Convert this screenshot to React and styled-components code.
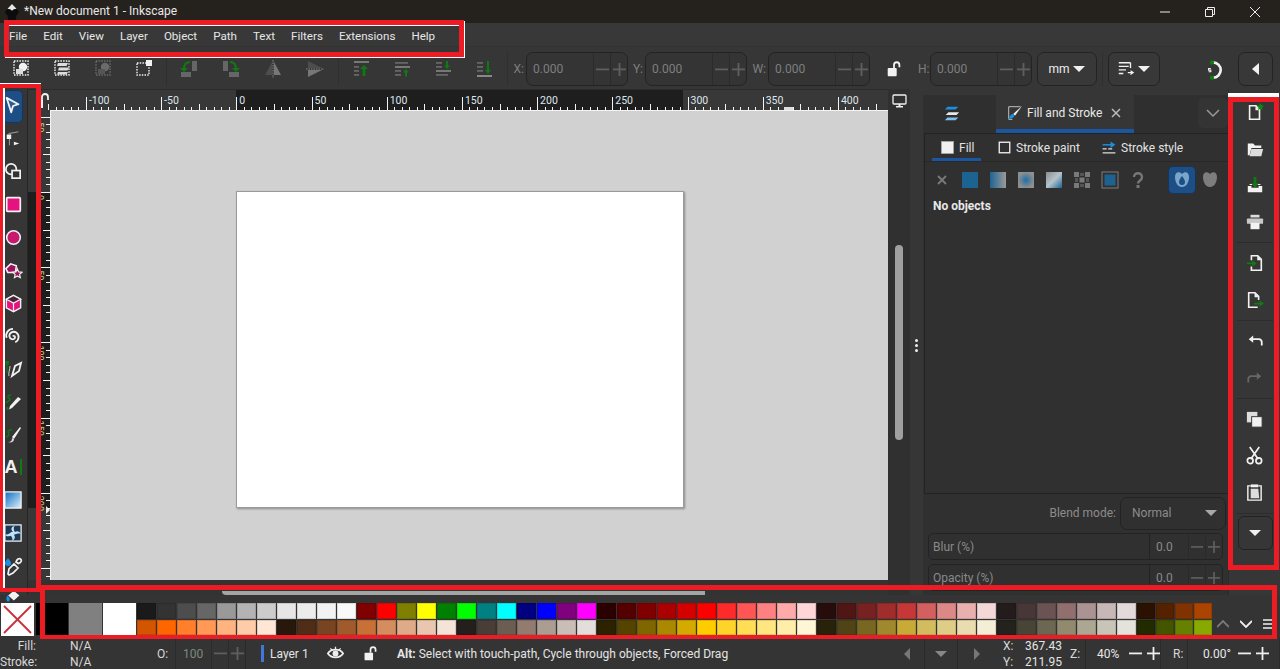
import React from "react";
import styled, { createGlobalStyle } from "styled-components";

const W = "#f2f2f2";
const D = "#6b6b6b";
const G = "#0f7a12";
const B = "#1b8fe0";
const P = "#e6127f";

const Global = createGlobalStyle`
  html, body { margin: 0; padding: 0; background: #333; }
  * { box-sizing: border-box; }
`;
const Page = styled.div`
  position: relative; width: 1280px; height: 669px; overflow: hidden; display: flex; flex-direction: column;
  font-family: Roboto, "Noto Sans", sans-serif; font-size: 12px; color: #e4e4e4; background: #363636;
`;
const Glyph = styled.svg`display: block; flex: none; width: ${p => p.$s || 20}px; height: ${p => p.$s || 20}px;`;
const I = ({ s, children }) => <Glyph $s={s} viewBox="0 0 20 20">{children}</Glyph>;

/* ---------- title + menu ---------- */
const TitleBar = styled.div`height: 23px; background: #25211d; display: flex; align-items: center; padding: 0 3px;`;
const TitleText = styled.div`margin-left: 3px; font-size: 12px; color: #e8e8e8; flex: 1; line-height: 23px;`;
const WinButton = styled.div`width: 45px; display: flex; justify-content: center; align-items: center; height: 23px;`;
const MenuBar = styled.div`height: 24px; background: #383838; display: flex; align-items: center; padding: 2px 0 0 1px; border-bottom: 1px solid #333;`;
const MenuItem = styled.div`padding: 0 8px; font-size: 11.6px; line-height: 22px; color: #e6e6e6;`;

/* ---------- commands toolbar ---------- */
const TopBar = styled.div`height: 42px; background: #363636; display: flex; align-items: center; padding: 2px 0 0 1px;`;
const ToolCell = styled.div`
  width: ${p => p.$w || 41}px; height: 34px; flex: none; display: flex; align-items: center;
  justify-content: ${p => p.$end ? "flex-end" : "center"}; padding-right: ${p => p.$end || 0}px;
`;
const VSep = styled.div`width: 1px; height: 34px; background: #2f2f2f; margin: 0 ${p => p.$m || 3}px; flex: none;`;
const FieldLabel = styled.div`width: ${p => p.$w || 18}px; flex: none; text-align: right; padding-right: 2px; font-size: 12px; color: #7f7f7f;`;
const Spin = styled.div`
  width: 102px; height: 34px; flex: none; display: flex; align-items: stretch;
  border: 1px solid #232323; border-radius: 7px; background: #343434;
`;
const SpinValue = styled.div`flex: 1; padding-left: 6px; display: flex; align-items: center; font-size: 12px; color: #7f7f7f;`;
const SpinBtn = styled.div`width: 17px; flex: none; display: flex; align-items: center; justify-content: center; border-left: 1px solid #2b2b2b;`;
const DropBtn = styled.div`
  width: ${p => p.$w}px; height: 34px; flex: none; display: flex; align-items: center; justify-content: center; gap: 2px;
  border: 1px solid #232323; border-radius: 7px; background: #383838; font-size: 12px; color: #eee;
`;
const Pm = ({ c = "#5f5f5f", s = 13 }) => (<Glyph $s={s} viewBox="0 0 13 13"><rect x="0" y="5.5" width="13" height="1.8" fill={c} /></Glyph>);
const Pp = ({ c = "#5f5f5f", s = 13 }) => (<Glyph $s={s} viewBox="0 0 13 13"><rect x="0" y="5.5" width="13" height="1.8" fill={c} /><rect x="5.6" y="0" width="1.8" height="13" fill={c} /></Glyph>);
const Down = ({ c = "#f0f0f0", w = 14 }) => (<Glyph $s={w} viewBox="0 0 14 14"><path d="M1 4h12l-6 6z" fill={c} /></Glyph>);

const Dash = ({ c = W, x = 2, y = 2, w = 14, h = 14 }) => (<rect x={x} y={y} width={w} height={h} fill="none" stroke={c} strokeWidth="1.4" strokeDasharray="1.5 1.2" />);
const topIcons = [
  <I><Dash /><circle cx="11" cy="8" r="4.2" fill={W} /><rect x="4" y="10" width="7" height="5" fill="#ddd" /></I>,
  <I><Dash /><path d="M5 4h10l-1.500 3H4zM6 8.500h10l-1.500 3H5zM5 13h10l-1.500 2.500H4z" fill="#ddd" /></I>,
  <I><Dash c={D} /><circle cx="11" cy="8" r="4.200" fill={D} /><rect x="4" y="10" width="7" height="5" fill="#555" /></I>,
  <I><Dash y="4" w="12" h="12" /><rect x="11" y="1" width="6" height="6" fill={W} /></I>,
];
const rotIcons = [
  <I><rect x="13" y="2" width="5" height="10" fill="#666" /><rect x="2" y="13" width="10" height="5" fill="#666" /><path d="M11 3C7 3 5 6 5 10" fill="none" stroke={G} strokeWidth="2" /><path d="M1 9h8l-4 4z" fill={G} /></I>,
  <I><rect x="2" y="2" width="5" height="10" fill="#666" /><rect x="8" y="13" width="10" height="5" fill="#666" /><path d="M9 3c4 0 6 3 6 7" fill="none" stroke={G} strokeWidth="2" /><path d="M11 9h8l-4 4z" fill={G} /></I>,
  <I><path d="M2 16L9 3v13z" fill="#4d4d4d" /><path d="M11 3l7 13h-7z" fill="#777" /><path d="M10 1v18" stroke="#888" strokeDasharray="1.500 1" /></I>,
  <I><path d="M3 2l14 7H3z" fill="#4d4d4d" /><path d="M3 11h14l-14 7z" fill="#777" /><path d="M1 10h18" stroke="#888" strokeDasharray="1.500 1" /></I>,
];
const Lines = ({ ys }) => ys.map(([x, y, w]) => <rect key={y + "" + x} x={x} y={y} width={w} height="1.800" fill="#666" />);
const orderIcons = [
  <I><rect x="2" y="2" width="15" height="2" fill="#777" /><Lines ys={[[2, 7, 5], [2, 11, 5], [2, 15, 5]]} /><path d="M12 6l-4 4h2.600v7h2.800v-7H16z" fill={G} /></I>,
  <I><Lines ys={[[2, 3, 13], [2, 11, 6], [2, 15, 6]]} /><rect x="2" y="7" width="15" height="2" fill="#777" /><path d="M13 10l-3 3.500h2v4h2v-4h2z" fill={G} /></I>,
  <I><Lines ys={[[2, 3, 6], [2, 7, 6]]} /><rect x="2" y="11" width="15" height="2" fill="#777" /><rect x="2" y="15" width="12" height="1.800" fill="#666" /><path d="M13 10l-3-3.500h2V2h2v4.500h2z" fill={G} /></I>,
  <I><Lines ys={[[2, 3, 6], [2, 7, 6], [2, 11, 6]]} /><rect x="2" y="16" width="15" height="2" fill="#888" /><path d="M13 15l-3-4h2V2h2v9h2z" fill={G} /></I>,
];
const Padlock = ({ s = 18 }) => (<I s={s}><rect x="3" y="9" width="10" height="9" rx="1" fill={W} /><path d="M10 9V5.500a3 3 0 0 1 6 0V8" fill="none" stroke={W} strokeWidth="2" /></I>);

const TopToolbar = () => (
  <TopBar>
    {topIcons.map((c, i) => <ToolCell key={i}>{c}</ToolCell>)}
    <VSep $m={1} />
    {rotIcons.map((c, i) => <ToolCell key={i} $w={42}>{c}</ToolCell>)}
    <VSep $m={2} />
    {orderIcons.map((c, i) => <ToolCell key={i}>{c}</ToolCell>)}
    <VSep $m={2} />
    <FieldLabel $w={16}>X:</FieldLabel>
    <Spin><SpinValue>0.000</SpinValue><SpinBtn><Pm /></SpinBtn><SpinBtn><Pp /></SpinBtn></Spin>
    <FieldLabel $w={17}>Y:</FieldLabel>
    <Spin><SpinValue>0.000</SpinValue><SpinBtn><Pm /></SpinBtn><SpinBtn><Pp /></SpinBtn></Spin>
    <FieldLabel $w={21}>W:</FieldLabel>
    <Spin><SpinValue>0.000</SpinValue><SpinBtn><Pm /></SpinBtn><SpinBtn><Pp /></SpinBtn></Spin>
    <ToolCell $w={48}><Padlock /></ToolCell>
    <FieldLabel $w={12}>H:</FieldLabel>
    <Spin><SpinValue>0.000</SpinValue><SpinBtn><Pm /></SpinBtn><SpinBtn><Pp /></SpinBtn></Spin>
    <ToolCell $w={5} />
    <DropBtn $w={60}>mm<Down /></DropBtn>
    <VSep $m={5} />
    <DropBtn $w={52}>
      <I s={18}><path d="M2 3h13M2 7h11M2 11h8M2 15h5" stroke={W} strokeWidth="1.500" /><path d="M12 14h5M15 12l3 2-3 2" stroke={W} strokeWidth="1.300" fill="none" /><path d="M15 3v6" stroke={W} strokeWidth="1.500" /></I>
      <Down />
    </DropBtn>
    <ToolCell $w={78} $end={14}>
      <I s={22}><path d="M10 4a7 7 0 1 1 0 14" fill="none" stroke={W} strokeWidth="2.400" /><circle cx="9" cy="4" r="2" fill={G} /><circle cx="9" cy="18" r="2" fill={G} /><path d="M8 9.500H6v1.500h2v1.500H6" fill="none" stroke={W} strokeWidth="1" /></I>
    </ToolCell>
    <DropBtn $w={35}><Glyph $s={14} viewBox="0 0 14 14"><path d="M10 1v12L3 7z" fill={W} /></Glyph></DropBtn>
  </TopBar>
);

/* ---------- workspace ---------- */
const Workspace = styled.div`height: 506px; display: flex; flex: none;`;
const LeftTools = styled.div`width: 28px; flex: none; border-right: 1px solid #262626; padding: 1px 1px 0 0; display: flex; flex-direction: column; align-items: center; background: #363636;`;
const Tool = styled.div`
  width: 20px; height: 32.800px; flex: none; display: flex; align-items: center; justify-content: center;
  ${p => p.$on && "background: #1d4f86; border: 1px solid #14365c; border-radius: 5px;"}
`;
const leftIcons = [
  <I s={18}><path d="M3 1l13 7-6 2-2 7z" fill="#2a5f96" stroke={W} strokeWidth="2" strokeLinejoin="round" /></I>,
  <I s={18}><rect x="3" y="5" width="5" height="5" fill={W} /><path d="M5 4l11-2M6 10v7" stroke="#aaa" fill="none" /><path d="M11 13l6 2-6 2z" fill={W} /></I>,
  <I s={19}><circle cx="7.500" cy="7.500" r="5.500" fill="none" stroke={W} strokeWidth="1.800" /><rect x="8.500" y="9" width="8.500" height="8" fill="#333" stroke={W} strokeWidth="1.800" /></I>,
  <I s={17}><rect x="2" y="2" width="16" height="16" rx="1" fill={P} stroke={W} strokeWidth="2" /></I>,
  <I s={17}><circle cx="10" cy="10" r="8" fill="#c8186f" stroke={W} strokeWidth="1.800" /></I>,
  <I s={19}><path d="M2 8l5-5 6 2-1 7H4z" fill="#a01260" stroke={W} strokeWidth="1.600" /><path d="M14 8l1.500 3.500 3.500.3-2.600 2.300.8 3.500-3.200-1.800-3 1.800.7-3.500-2.600-2.300 3.500-.3z" fill="#a01260" stroke={W} strokeWidth="1.200" /></I>,
  <I s={19}><path d="M10 1.500l7.500 4v9l-7.500 4-7.500-4v-9z" fill={P} stroke={W} strokeWidth="1.500" /><path d="M10 1.500l7.500 4-7.500 4-7.500-4z" fill="#4a2238" stroke={W} strokeWidth="1.300" /><path d="M10 9.500v9" stroke={W} strokeWidth="1.300" /></I>,
  <I s={18}><path d="M10 10.500c1-1.500 3 0 2 2-1.500 2-5.500 1.500-6-2-.5-4 4-6.500 7.500-4.500 4 2.500 3.500 9-1 11M3 12C1 7 5 2 10 2" fill="none" stroke={W} strokeWidth="2" /></I>,
  <I s={20}><rect x="2.500" y="2" width="3.500" height="3.500" fill={G} /><path d="M4 5v9" stroke={G} strokeWidth="1.200" /><path d="M9 17l3-10 6-3-2 8z" fill="none" stroke={W} strokeWidth="1.800" /><path d="M7 7c0 4-2 7-1 10" stroke="#ccc" fill="none" /></I>,
  <I s={20}><path d="M9 16l-3 1.500 1-3.500 8-9 3 2z" fill={W} /><path d="M3 11c2-2 6-3 3-5-2-1-1-3 2-3" fill="none" stroke={G} strokeWidth="1.500" /><path d="M4 15l.8 3" stroke={G} strokeWidth="2" /></I>,
  <I s={20}><path d="M9 13l8-10 1 1-7 11z" fill={W} /><path d="M5 18c3 0 4-1 4-4l2 1c0 3-3 4-6 3z" fill="#ddd" /><path d="M3 13c3-1 4-3 2-5 0-2 2-2 4-2" fill="none" stroke={G} strokeWidth="1.400" /></I>,
  <ToolText />,
  <I s={18}><defs><linearGradient id="lg" x1="0" y1="0" x2="1" y2="1"><stop offset="0" stopColor="#0b6ec2" /><stop offset="1" stopColor="#dff1fc" /></linearGradient></defs><rect x="1" y="1" width="18" height="18" fill="url(#lg)" stroke={W} strokeWidth="1.400" /></I>,
  <I s={18}><rect x="1" y="1" width="18" height="18" fill="#1c3a55" stroke={W} strokeWidth="1.400" /><path d="M10 9C7 6 8 3 12 2c-2 2-1 5 0 7 3-2 5-1 7 2-3-1-5 0-8 1 2 3 1 5-2 7 1-3 0-5-2-6-2 1-4 1-6-1 3 0 5-1 7-3z" fill="#bfe2f8" /></I>,
  <I s={20}><path d="M5 2c2 2.500 3 4 3 5a3 3 0 0 1-6 0c0-1 1-2.500 3-5z" fill={B} /><path d="M6 19l-1-1 1-5 5-5 4 4-5 5zM13 6c1-3 3-4 4.500-3s1 3.500-2 4.500z" fill="none" stroke={W} strokeWidth="1.700" /></I>,
];
function ToolText() { return <ToolTextBox>A<ToolTextBar /></ToolTextBox>; }
const ToolTextBox = styled.div`font-family: "Liberation Sans", sans-serif; font-weight: 700; font-size: 18px; color: #f0f0f0; display: flex; align-items: center; gap: 2px; line-height: 20px;`;
const ToolTextBar = styled.span`display: block; width: 2px; height: 16px; background: ${G};`;

const CanvasColumn = styled.div`width: 860px; flex: none; display: flex; flex-direction: column; background: #383838;`;
const RulerRow = styled.div`display: flex; height: 469px;`;
const RulerSvg = styled.svg`display: block; flex: none;`;
const Canvas = styled.div`flex: 1; background: #d1d1d1; padding: 80px 0 0 185px;`;
const DocPage = styled.div`width: 448px; height: 317px; background: #fff; border: 1px solid #9a9a9a; box-shadow: 1px 1px 2px rgba(0,0,0,.35);`;
const HStrip = styled.div`flex: 1; background: #333; padding: 11px 0 0 194px;`;
const HThumb = styled.div`width: 483px; height: 4px; background: #a4a4a4; border-radius: 0 0 0 4px;`;
const VStrip = styled.div`width: 22px; flex: none; background: #303030; display: flex; flex-direction: column; align-items: center; padding-top: 5px;`;
const VThumb = styled.div`width: 8px; height: 195px; border-radius: 4px; background: #a0a0a0; margin-top: 136px;`;
const MonitorWrap = styled.div`height: 15px;`;
const Handle = styled.div`width: 13px; flex: none; background: #363636; display: flex; flex-direction: column; align-items: center; justify-content: center; gap: 2px; padding-top: 6px;`;
const Dot = styled.div`width: 3px; height: 3px; border-radius: 50%; background: #eee;`;

const SC = 1.504, X0 = 236.3, Y0 = 192;
const ticks = (from, to) => { const r = []; for (let u = from; u <= to; u += 5) r.push(u); return r; };
const HRuler = () => (
  <RulerSvg width="860" height="22" viewBox="28 89 860 22">
    <rect x="28" y="89" width="860" height="22" fill="#383838" />
    <rect x="236" y="89" width="447" height="22" fill="#1e1e1e" />
    <rect x="28" y="89" width="860" height="1" fill="#2c2c2c" />
    <rect x="50" y="110" width="838" height="1" fill="#f4f4f4" />
    {ticks(-125, 425).map(u => {
      const x = Math.round(X0 + u * SC) + 0.5;
      const t = u % 50 === 0 ? 97 : u % 25 === 0 ? 104 : 107;
      return <line key={u} x1={x} x2={x} y1={t} y2={110} stroke="#f4f4f4" />;
    })}
    {ticks(-100, 400).filter(u => u % 50 === 0).map(u => (
      <text key={u} x={X0 + u * SC + 3} y={104} fontSize="10.5" fill="#dfe6ee" fontFamily="Roboto">{u}</text>
    ))}
    <rect x="784" y="107" width="9" height="3" fill="#ddd" />
    <g transform="translate(36 94)">
      <rect x="0" y="6" width="7" height="8" fill={W} />
      <path d="M6 6V3a3 3 0 0 1 6 0v3" fill="none" stroke={W} strokeWidth="1.800" />
    </g>
  </RulerSvg>
);
const VRuler = () => (
  <RulerSvg width="23" height="469" viewBox="28 111 23 469">
    <rect x="28" y="111" width="23" height="469" fill="#383838" />
    <rect x="28" y="192" width="23" height="316" fill="#1e1e1e" />
    <rect x="50" y="111" width="1" height="469" fill="#f4f4f4" />
    {ticks(-50, 255).map(u => {
      const y = Math.round(Y0 + u * SC) + 0.5;
      const t = u % 50 === 0 ? 41 : u % 25 === 0 ? 43 : 46;
      return <line key={u} x1={t} x2={50} y1={y} y2={y} stroke="#f4f4f4" />;
    })}
    {[-50, 0, 50, 100, 150, 200].map(u => (
      <text key={u} transform={`translate(37 ${Y0 + u * SC + 3}) rotate(90)`} fontSize="9" fill="#d8c98a" fontFamily="Roboto">{u}</text>
    ))}
    <path d="M46 506l4 4-4 4z" fill="#eee" />
  </RulerSvg>
);

/* ---------- dialog panel ---------- */
const Panel = styled.div`flex: 1; min-width: 0; background: #363636; display: flex; flex-direction: column; padding-top: 6px;`;
const DockTabs = styled.div`height: 38px; flex: none; display: flex; background: #2f2f2f;`;
const DockIconTab = styled.div`width: 73px; display: flex; align-items: center; justify-content: center; padding-right: 16px;`;
const DockTab = styled.div`width: 138px; background: #363636; border-bottom: 4px solid #1a57a0; display: flex; align-items: center; padding: 1px 0 0 10px; gap: 3px; font-size: 12px; color: #e8e8e8; white-space: nowrap;`;
const DockClose = styled.span`margin-left: 6px; display: flex;`;
const DockFill = styled.div`flex: 1; display: flex; justify-content: flex-end; padding: 3px 0 0;`;
const DockMenu = styled.div`width: 30px; height: 30px; background: #343434; border-radius: 5px; display: flex; align-items: center; justify-content: center;`;
const PanelBody = styled.div`flex: 1; background: #303030; display: flex; flex-direction: column; min-height: 0;`;
const FillBox = styled.div`height: 361px; flex: none; margin-left: 1px; border: 1px solid #232323; border-width: 1px 0 1px 1px; display: flex; flex-direction: column;`;
const SubTabs = styled.div`height: 28px; flex: none; display: flex; align-items: stretch; border-bottom: 1px solid #282828; padding-left: 7px;`;
const SubTab = styled.div`
  width: ${p => p.$w}px; flex: none; display: flex; align-items: center; gap: 4px; padding-left: ${p => p.$pl || 0}px; font-size: 12px; color: #e2e2e2; white-space: nowrap;
  ${p => p.$on && "border-bottom: 3px solid #1a57a0; padding-top: 3px;"}
`;
const PaintRow = styled.div`height: 35px; display: flex; align-items: center; padding-left: 3px; flex: none;`;
const PaintCell = styled.div`width: 28px; height: 28px; flex: none; display: flex; align-items: center; justify-content: center; border-radius: 5px; ${p => p.$on && "background: #1d4f86; border: 1px solid #14365c;"}`;
const PaintGap = styled.div`width: ${p => p.$w}px; flex: none;`;
const NoObjects = styled.div`font-weight: 700; font-size: 12px; color: #e8e8e8; padding-left: 8px; line-height: 18px;`;
const BlendRow = styled.div`height: 34px; flex: none; margin-top: 2px; display: flex; align-items: center; justify-content: flex-end; padding-right: 2px; gap: 4px; font-size: 12px; color: #8c8c8c;`;
const BlendSelect = styled.div`width: 106px; height: 33px; border: 1px solid #232323; border-radius: 7px; display: flex; align-items: center; justify-content: space-between; padding: 0 7px 0 11px;`;
const SliderRow = styled.div`height: 27px; flex: none; margin: ${p => p.$mt || 3}px 5px 0 5px; border: 1px solid #232323; border-radius: 5px; display: flex; align-items: center; font-size: 12px; color: #8a8a8a;`;
const SliderName = styled.div`flex: 1; padding-left: 4px; height: 100%; display: flex; align-items: center; border-right: 1px solid #232323;`;
const SliderVal = styled.div`width: 38px; padding-left: 6px;`;
const SliderBtn = styled.div`width: 17px; height: 100%; border-left: 1px solid #2a2a2a; display: flex; align-items: center; justify-content: center;`;
const paintIcons = [
  <I s={20}><path d="M6 6l8 8M14 6l-8 8" stroke="#7a7a7a" strokeWidth="1.800" /></I>,
  <I s={20}><rect x="2" y="2" width="16" height="16" fill="#1d6392" /></I>,
  <I s={20}><defs><linearGradient id="p1"><stop offset="0" stopColor="#1d6392" /><stop offset="1" stopColor="#9a9a9a" /></linearGradient></defs><rect x="2" y="2" width="16" height="16" fill="url(#p1)" /></I>,
  <I s={20}><defs><radialGradient id="p2"><stop offset="0" stopColor="#1d6fa8" /><stop offset="1" stopColor="#8f8f8f" /></radialGradient></defs><rect x="2" y="2" width="16" height="16" fill="url(#p2)" /></I>,
  <I s={20}><defs><linearGradient id="p3" x1="0" y1="0" x2="1" y2="1"><stop offset="0" stopColor="#8c8c8c" /><stop offset=".5" stopColor="#b5c4cc" /><stop offset="1" stopColor="#1d6392" /></linearGradient></defs><rect x="2" y="2" width="16" height="16" fill="url(#p3)" /></I>,
  <I s={20}><path d="M2 2h5v5H2zM13 2h5v5h-5zM2 13h5v5H2zM13 13h5v5h-5zM7.500 7.500h5v5h-5z" fill="#7a7a7a" /><path d="M8 3h4v3H8zM3 8h3v4H3zM14 8h3v4h-3zM8 14h4v3H8z" fill="#555" /></I>,
  <I s={20}><rect x="2" y="2" width="16" height="16" fill="none" stroke="#7d7d7d" /><rect x="4.500" y="4.500" width="11" height="11" fill="#1d6392" /></I>,
  <I s={20}><path d="M6 7c0-5 8-5 8 0 0 4-4 3.500-4 6.500" fill="none" stroke="#777" strokeWidth="2.400" /><rect x="8.500" y="15" width="3" height="3" fill="#777" /></I>,
];

/* ---------- right command bar ---------- */
const RightBar = styled.div`width: 52px; flex: none; background: #363636; display: flex; flex-direction: column; align-items: center; padding-top: 5px; border-left: 1px solid #2b2b2b;`;
const Cmd = styled.div`width: 36px; height: 36.500px; flex: none; display: flex; align-items: center; justify-content: center;`;
const CmdSep = styled.div`width: 36px; height: 1px; flex: none; background: #2c2c2c; margin: 2px 0;`;
const CmdMore = styled.div`width: 35px; height: 34px; flex: none; margin-left: 1px; border: 1px solid #232323; border-radius: 6px; display: flex; align-items: center; justify-content: center;`;
const File = ({ extra }) => (<I s={18}><path d="M4 3h7l4 4v11H4z" fill="none" stroke={W} strokeWidth="1.800" /><path d="M10.500 3v5H15z" fill={W} />{extra}</I>);
const cmdGroups = [
  [
    <File extra={<path d="M16 0l1.300 2.600 2.700.4-2 2 .5 2.700-2.500-1.300-2.500 1.300.5-2.700-2-2 2.700-.4z" fill="#0a8a0a" />} />,
    <I s={18}><path d="M2 4h6l2 2h7v3H6L4 17H2z" fill={W} /><path d="M6 10h13l-2 8H4z" fill="#ddd" /></I>,
    <I s={18}><path d="M2 11h4v2h8v-2h4v7H2z M4 9h3v1H4zM13 9h3v1h-3z" fill={W} /><path d="M10 13L6 8h2.500V1h3v7H14z" fill={G} /></I>,
    <I s={18}><rect x="5" y="2" width="10" height="3" fill="#ddd" /><rect x="1" y="6" width="18" height="6" rx="1" fill="#c8c8c8" /><rect x="5" y="11" width="10" height="7" fill={W} /></I>,
  ],
  [
    <I s={18}><path d="M6 7V2h7l4 4v12H6v-4" fill="none" stroke={W} strokeWidth="1.800" /><path d="M12.500 2v5H17z" fill={W} /><path d="M1 9.500h6V7l5 3.500L7 14v-2.500H1z" fill={G} /></I>,
    <I s={18}><path d="M13 18H3V2h7l4 4v4" fill="none" stroke={W} strokeWidth="1.800" /><path d="M9.500 2v5H14z" fill={W} /><path d="M9 13h6v-2.500l5 3.500-5 3.500V15H9z" fill={G} /></I>,
  ],
  [
    <I s={18}><path d="M8 4L3 8l5 4V9h6a2.500 2.500 0 0 1 2.500 2.500V15h2v-4A4 4 0 0 0 14 7H8z" fill={W} /></I>,
    <I s={18}><path d="M12 4l5 4-5 4V9H6a2.500 2.500 0 0 0-2.500 2.500V15h-2v-4A4 4 0 0 1 6 7h6z" fill="#666" /></I>,
  ],
  [
    <I s={19}><rect x="2" y="2" width="11" height="11" fill="#ddd" /><rect x="7" y="7" width="11" height="11" fill={W} stroke="#363636" /></I>,
    <I s={19}><path d="M5 1l9 13M15 1L6 14" stroke={W} strokeWidth="1.800" /><circle cx="5.500" cy="15.500" r="3" fill="none" stroke={W} strokeWidth="1.800" /><circle cx="14.500" cy="15.500" r="3" fill="none" stroke={W} strokeWidth="1.800" /></I>,
    <I s={19}><path d="M6 3H3v15h14V3h-3" fill="none" stroke={W} strokeWidth="1.500" /><rect x="6" y="1.500" width="8" height="3" fill={W} /><path d="M6 6h8l1 10H6z" fill="#ddd" /></I>,
  ],
];

/* ---------- palette ---------- */
const Palette = styled.div`height: 43px; flex: none; display: flex; background: #343434; align-items: flex-start;`;
const IndicatorCol = styled.div`width: 36px; flex: none; padding-left: 1px; display: flex; flex-direction: column;`;
const BucketCell = styled.div`height: 8px; margin-top: -5px; padding-left: 4px; margin-bottom: 5px;`;
const NoneBox = styled.div`width: 33px; height: 33px; background: #fff;`;
const BigSwatch = styled.div`width: ${p => p.$w}px; height: 32px; margin: 8px 1px 0 0; flex: none; background: ${p => p.$c};`;
const SmallGrid = styled.div`
  margin-top: 8px; display: grid; flex: none; gap: 1px;
  grid-template-columns: repeat(50, 19px) repeat(4, 18px); grid-template-rows: 16px 15px;
`;
const Swatch = styled.div`background: ${p => p.$c}; box-shadow: inset 0 0 0 1px rgba(0,0,0,.12);`;
const PaletteCtl = styled.div`flex: 1; display: flex; align-items: center; height: 43px; padding: 14px 0 0 5px; gap: 11px;`;
const row1 = "1a1a1a 333333 4d4d4d 666666 999999 b3b3b3 cccccc e6e6e6 ececec f2f2f2 f9f9f9 800000 ff0000 808000 ffff00 008000 00ff00 008080 00ffff 000080 0000ff 800080 ff00ff 2b0000 550000 800000 aa0000 d40000 ff0000 ff2a2a ff5555 ff8080 ffaaaa ffd5d5 280b0b 501616 782121 a02c2c c83737 d35f5f de8787 e9afaf f4d7d7 241c1c 483737 6c5353 916f6f ac9393 c8b7b7 e3dbdb 2b1100 552200 803300 aa4400".split(" ");
const row2 = "d45500 ff6600 ff7f2a ff9955 ffb380 ffccaa ffe6d5 28170b 502d16 784421 a05a2c c87137 d38d5f deaa87 e9c6af f4e3d7 241f1c 483e37 6c5d53 917c6f ac9d93 c8beb7 e3dedb 2b2200 554400 806600 aa8800 d4aa00 ffcc00 ffd42a ffdd55 ffe680 ffeeaa fff6d5 28220b 504416 786721 a0892c c8ab37 d3bc5f decd87 e9ddaf f4eed7 24221c 484537 6c6753 918a6f aca793 c8c4b7 e3e2db 222b00 445500 668000 88aa00".split(" ");

/* ---------- status ---------- */
const Status = styled.div`height: 31px; flex: none; background: #343434; display: flex; align-items: stretch; font-size: 12px; overflow: hidden;`;
const StyleBlock = styled.div`width: 155px; flex: none; display: grid; grid-template-columns: 36px 1fr; column-gap: 34px; grid-auto-rows: 16.300px; align-content: start; line-height: 16px; color: #d8d8d8;`;
const StyleKey = styled.div`text-align: right;`;
const OLabel = styled.div`width: 20px; flex: none; padding-left: 2px; display: flex; align-items: center; color: #d8d8d8;`;
const OBox = styled.div`width: 71px; flex: none; display: flex; border: 1px solid #2a2a2a; border-width: 0 1px;`;
const OVal = styled.div`flex: 1; padding-left: 7px; display: flex; align-items: center; color: #7e8a7e;`;
const OBtn = styled.div`width: 17px; flex: none; display: flex; align-items: center; justify-content: center; border-left: 1px solid #2c2c2c;`;
const LayerBar = styled.div`width: 3px; height: 17px; background: #3f78d8; align-self: center; margin: 0 6px 0 15px; flex: none;`;
const LayerName = styled.div`width: 55px; flex: none; display: flex; align-items: center; color: #e4e4e4;`;
const StatIcon = styled.div`width: ${p => p.$w}px; flex: none; display: flex; align-items: center; justify-content: center;`;
const Hint = styled.div`flex: 1; display: flex; align-items: center; white-space: pre; color: #e4e4e4; padding-left: 2px; min-width: 0;`;
const NavCell = styled.div`width: ${p => p.$w}px; flex: none; display: flex; align-items: center; justify-content: center; ${p => p.$box && "border: 1px solid #2a2a2a; border-width: 0 1px;"}`;
const Coords = styled.div`width: 70px; flex: none; display: grid; grid-template-columns: 22px 1fr; grid-auto-rows: 16.300px; align-content: start; padding-left: 7px; color: #d8d8d8; line-height: 16px;`;
const CoordVal = styled.div`color: #e4e4e4;`;
const ZoomKey = styled.div`width: ${p => p.$w}px; padding-left: ${p => p.$pl || 0}px; flex: none; display: flex; align-items: center; color: #d8d8d8;`;
const ZoomBox = styled.div`width: ${p => p.$w}px; flex: none; display: flex; align-items: center; border-left: 1px solid #2a2a2a; border-right: 1px solid #2a2a2a; padding-left: ${p => p.$pl}px; gap: 5px; color: #e8e8e8;`;
const ZoomVal = styled.div`width: ${p => p.$w}px; flex: none;`;

/* ---------- annotation frames lying over the screenshot ---------- */
const Mark = styled.div`position: absolute; border: 5px solid #ed1c24; pointer-events: none;`;
const MenuMark = styled(Mark)`left: 4px; top: 20px; width: 460px; height: 37px; box-shadow: 1px 1px 0 #fff, inset 0 1px 0 #fff;`;
const ToolsMark = styled(Mark)`left: -1px; top: 84px; width: 42px; height: 508px; border-width: 4px 5px 4px 4px; box-shadow: 0 -1px 0 #fff, inset 2px 0 0 #fff;`;
const CommandsMark = styled(Mark)`left: 1228px; top: 97px; width: 51px; height: 473px; box-shadow: 0 -4px 0 #fff;`;
const PaletteMark = styled(Mark)`left: 40px; top: 585px; width: 1237px; height: 54px; border-bottom-width: 4px;`;

const menus = ["File", "Edit", "View", "Layer", "Object", "Path", "Text", "Filters", "Extensions", "Help"];

export default function App() {
  return (
    <Page>
      <Global />
      <TitleBar>
        <Glyph $s={18} viewBox="0 0 20 20"><path d="M10 1l8 9-3 4-1 5H6l-1-5-3-4z" fill="#0c0c0c" /><path d="M10 1l5 5.500-3 .5-2 1.500L8 7 5 6.500z" fill="#e8e8e8" /></Glyph>
        <TitleText>*New document 1 - Inkscape</TitleText>
        <WinButton><Glyph $s={12} viewBox="0 0 12 12"><rect x="1" y="5.500" width="10" height="1" fill="#eee" /></Glyph></WinButton>
        <WinButton><Glyph $s={12} viewBox="0 0 12 12"><path d="M1.500 3.500h7v7h-7zM3.500 3.500v-2h7v7h-2" fill="none" stroke="#eee" /></Glyph></WinButton>
        <WinButton><Glyph $s={12} viewBox="0 0 12 12"><path d="M1 1l10 10M11 1L1 11" stroke="#eee" /></Glyph></WinButton>
      </TitleBar>
      <MenuBar>{menus.map(m => <MenuItem key={m}>{m}</MenuItem>)}</MenuBar>
      <TopToolbar />
      <Workspace>
        <LeftTools>
          {leftIcons.map((c, i) => <Tool key={i} $on={i === 0}>{c}</Tool>)}
        </LeftTools>
        <CanvasColumn>
          <HRuler />
          <RulerRow>
            <VRuler />
            <Canvas><DocPage /></Canvas>
          </RulerRow>
          <HStrip><HThumb /></HStrip>
        </CanvasColumn>
        <VStrip>
          <MonitorWrap>
            <Glyph $s={15} viewBox="0 0 15 15"><rect x="1" y="1" width="13" height="9" rx="1" fill="none" stroke="#eee" strokeWidth="1.300" /><rect x="4" y="12" width="7" height="1.500" fill="#eee" /><rect x="6.500" y="10" width="2" height="2" fill="#eee" /></Glyph>
          </MonitorWrap>
          <VThumb />
        </VStrip>
        <Handle><Dot /><Dot /><Dot /></Handle>
        <Panel>
          <DockTabs>
            <DockIconTab>
              <I s={18}><path d="M5 2h12l-3 3H2z" fill="#1b8fe0" /><path d="M6 8h12l-3 3H3z" fill="#e8e8e8" /><path d="M5 14h12l-3 3H2z" fill="#7ac2ee" /></I>
            </DockIconTab>
            <DockTab>
              <I s={18}><path d="M16 3H3v14h4" fill="none" stroke="#cfcfcf" /><path d="M18 2L8 11l2 2z" fill="#eee" /><path d="M8 11c-3 0-4 3-6 6 3-1 7-1 7-4z" fill="#1b8fe0" /></I>
              Fill and Stroke
              <DockClose><Glyph $s={10} viewBox="0 0 10 10"><path d="M1 1l8 8M9 1L1 9" stroke="#bbb" strokeWidth="1.500" /></Glyph></DockClose>
            </DockTab>
            <DockFill><DockMenu><Glyph $s={14} viewBox="0 0 14 14"><path d="M1 4l6 6 6-6" fill="none" stroke="#9a9a9a" strokeWidth="1.500" /></Glyph></DockMenu></DockFill>
          </DockTabs>
          <PanelBody>
            <FillBox>
              <SubTabs>
                <SubTab $w={49} $pl={8} $on><I s={15}><rect x="2" y="2" width="16" height="16" fill="#f0f0f0" stroke="#aaa" /></I>Fill</SubTab>
                <SubTab $w={120} $pl={16}><I s={15}><rect x="3" y="3" width="14" height="14" fill="none" stroke="#eee" strokeWidth="1.800" /></I>Stroke paint</SubTab>
                <SubTab $w={100}><I s={16}><path d="M2 16h16M2 11h5M9 11h5" stroke="#ddd" strokeWidth="1.600" /><path d="M2 6h12" stroke={B} strokeWidth="1.800" /><path d="M12 2l6 4-6 4z" fill={B} /></I>Stroke style</SubTab>
              </SubTabs>
              <PaintRow>
                {paintIcons.map((c, i) => <PaintCell key={i}>{c}</PaintCell>)}
                <PaintGap $w={16} />
                <PaintCell $on><I s={20}><path d="M10 4c3-3 7-2 7 3 0 4-2 10-7 10S3 11 3 7c0-5 4-6 7-3z" fill="#7aa7c9" /><path d="M10 6c1.500 2 3 4 3 6a3 3 0 0 1-6 0c0-2 1.500-4 3-6z" fill="#1d4f86" /></I></PaintCell>
                <PaintCell><I s={20}><path d="M10 4c3-3 7-2 7 3 0 4-2 10-7 10S3 11 3 7c0-5 4-6 7-3z" fill="#7d7d7d" /></I></PaintCell>
              </PaintRow>
              <NoObjects>No objects</NoObjects>
            </FillBox>
            <BlendRow>
              Blend mode:
              <BlendSelect>Normal<Down c="#a8a8a8" /></BlendSelect>
            </BlendRow>
            <SliderRow>
              <SliderName>Blur (%)</SliderName><SliderVal>0.0</SliderVal>
              <SliderBtn><Pm s={12} /></SliderBtn><SliderBtn><Pp s={12} /></SliderBtn>
            </SliderRow>
            <SliderRow $mt={4}>
              <SliderName>Opacity (%)</SliderName><SliderVal>0.0</SliderVal>
              <SliderBtn><Pm s={12} /></SliderBtn><SliderBtn><Pp s={12} /></SliderBtn>
            </SliderRow>
          </PanelBody>
        </Panel>
        <RightBar>
          {cmdGroups.map((g, i) => (
            <React.Fragment key={i}>
              {g.map((c, j) => <Cmd key={j}>{c}</Cmd>)}
              <CmdSep />
            </React.Fragment>
          ))}
          <CmdMore><Down /></CmdMore>
        </RightBar>
      </Workspace>
      <Palette>
        <IndicatorCol>
          <BucketCell>
            <Glyph $s={16} viewBox="0 0 20 20"><path d="M11 1l7 6-7 6-7-6z" fill={W} /><path d="M3 7c3 3 4 5 2 7s-5-2-2-7z" fill={B} /></Glyph>
          </BucketCell>
          <NoneBox>
            <Glyph $s={33} viewBox="0 0 33 33"><path d="M3 3l27 27M30 3L3 30" stroke="#c9303a" strokeWidth="1.800" /></Glyph>
          </NoneBox>
        </IndicatorCol>
        <BigSwatch $w={32} $c="#000" />
        <BigSwatch $w={33} $c="#808080" />
        <BigSwatch $w={33} $c="#fff" />
        <SmallGrid>
          {row1.map((c, i) => <Swatch key={"a" + i} $c={"#" + c} />)}
          {row2.map((c, i) => <Swatch key={"b" + i} $c={"#" + c} />)}
        </SmallGrid>
        <PaletteCtl>
          <Glyph $s={12} viewBox="0 0 12 12"><path d="M0 9l6-6 6 6" fill="none" stroke="#7a7a7a" strokeWidth="1.800" /></Glyph>
          <Glyph $s={12} viewBox="0 0 12 12"><path d="M0 3l6 6 6-6" fill="none" stroke="#f0f0f0" strokeWidth="1.800" /></Glyph>
          <Glyph $s={10} viewBox="0 0 10 10"><path d="M0 1h10M0 5h10M0 9h10" stroke="#f0f0f0" strokeWidth="1.500" /></Glyph>
        </PaletteCtl>
      </Palette>
      <Status>
        <StyleBlock>
          <StyleKey>Fill:</StyleKey><div>N/A</div>
          <StyleKey>Stroke:</StyleKey><div>N/A</div>
        </StyleBlock>
        <OLabel>O:</OLabel>
        <OBox><OVal>100</OVal><OBtn><Pm /></OBtn><OBtn><Pp /></OBtn></OBox>
        <LayerBar />
        <LayerName>Layer 1</LayerName>
        <StatIcon $w={20}>
          <Glyph $s={17} viewBox="0 0 20 20"><path d="M1 10c4-6 14-6 18 0-4 6-14 6-18 0z" fill="none" stroke="#eee" strokeWidth="2" /><circle cx="10" cy="10" r="3.500" fill="#eee" /><path d="M4 4l2 2M10 2v3M16 4l-2 2" stroke="#eee" strokeWidth="1.500" /></Glyph>
        </StatIcon>
        <StatIcon $w={50}><Padlock s={17} /></StatIcon>
        <Hint><b>Alt:</b> Select with touch-path, Cycle through objects, Forced Drag</Hint>
        <NavCell $w={34}><Glyph $s={14} viewBox="0 0 14 14"><path d="M10 1v12L4 7z" fill="#777" /></Glyph></NavCell>
        <NavCell $w={34} $box><Glyph $s={14} viewBox="0 0 14 14"><path d="M1 4h12l-6 6z" fill="#888" /></Glyph></NavCell>
        <NavCell $w={38}><Glyph $s={14} viewBox="0 0 14 14"><path d="M4 1v12l6-6z" fill="#777" /></Glyph></NavCell>
        <Coords>
          <div>X:</div><CoordVal>367.43</CoordVal>
          <div>Y:</div><CoordVal>211.95</CoordVal>
        </Coords>
        <ZoomKey $w={19} $pl={4}>Z:</ZoomKey>
        <ZoomBox $w={76} $pl={11}><ZoomVal $w={27}>40%</ZoomVal><Pm c="#eee" /><Pp c="#eee" /></ZoomBox>
        <ZoomKey $w={26} $pl={12}>R:</ZoomKey>
        <ZoomBox $w={93} $pl={15}><ZoomVal $w={30}>0.00°</ZoomVal><Pm c="#eee" /><Pp c="#eee" /></ZoomBox>
      </Status>
      <MenuMark />
      <ToolsMark />
      <CommandsMark />
      <PaletteMark />
    </Page>
  );
}
